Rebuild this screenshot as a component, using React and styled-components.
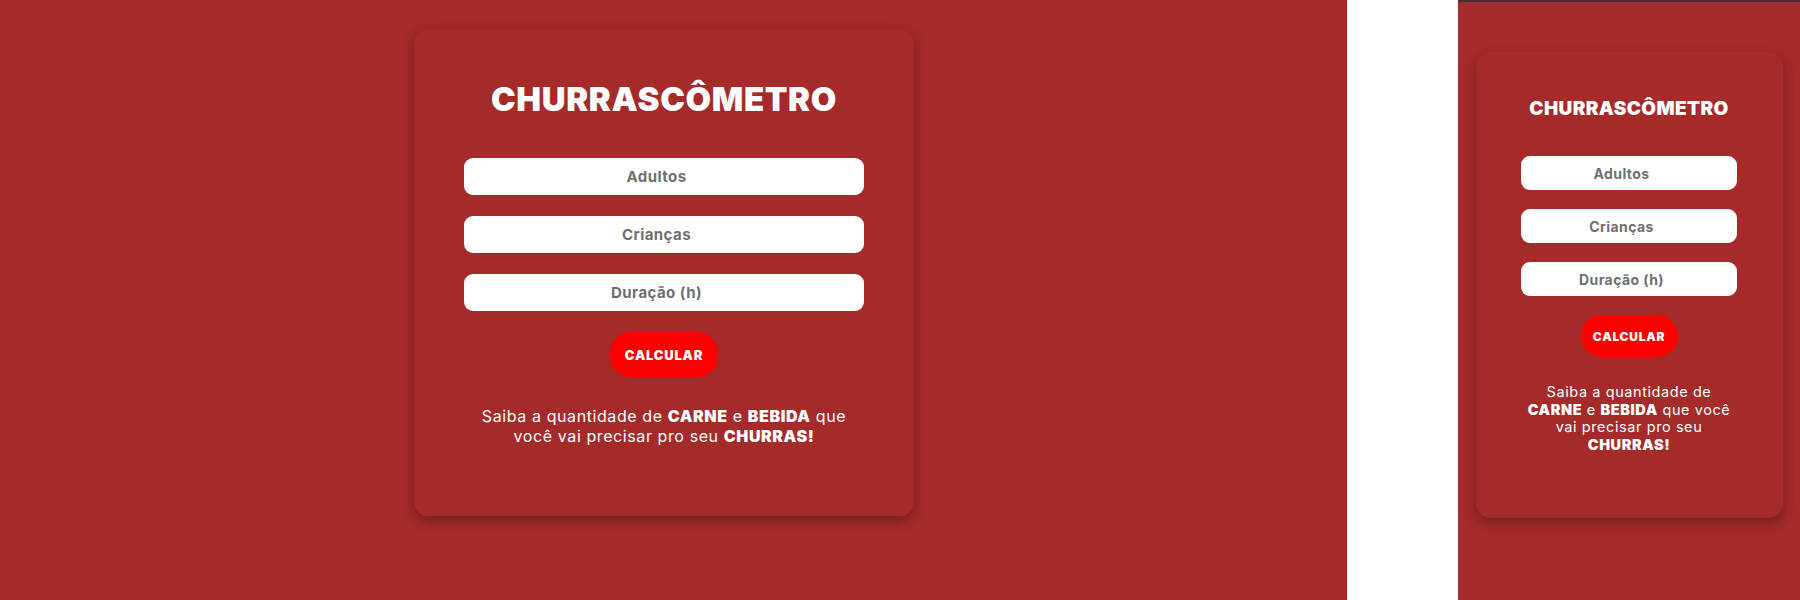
import React from "react";
import styled, { createGlobalStyle } from "styled-components";

const BRICK = "#a52a2a";

// two layouts of the same card: desktop (lg) and the narrow phone preview (sm)
const sizes = {
  lg: {
    cardW: 500,
    cardH: 487,
    padTop: 50,
    titleSize: 33,
    titleLine: 40,
    titleGap: 39,
    inputW: 400,
    inputH: 37,
    inputGap: 21,
    inputFont: 15,
    btnGap: 21,
    btnW: 108,
    btnH: 45,
    btnFont: 13,
    textGap: 30,
    textW: 400,
    textFont: 16,
    textLine: 19.5,
    textSpacing: "0.037em",
  },
  sm: {
    cardW: 307,
    cardH: 466,
    padTop: 45,
    titleSize: 19,
    titleLine: 24,
    titleGap: 35,
    inputW: 216,
    inputH: 34,
    inputGap: 19,
    inputFont: 14,
    btnGap: 19,
    btnW: 97,
    btnH: 42,
    btnFont: 12,
    textGap: 26,
    textW: 216,
    textFont: 14.5,
    textLine: 17.6,
    textSpacing: "0.04em",
  },
};

const GlobalStyle = createGlobalStyle`
  body {
    margin: 0;
    background: #fff;
    font-family: Inter, "Open Sans", sans-serif;
  }
`;

const Screen = styled.div`
  display: flex;
  height: 600px;
  width: 1800px;
  overflow: hidden;
`;

const DesktopView = styled.section`
  width: 1347px;
  padding-top: 29px;
  padding-right: 19px;
  box-sizing: border-box;
  background: ${BRICK};
  display: flex;
  justify-content: center;
  align-items: flex-start;
`;

const Gap = styled.div`
  width: 111px;
  background: #fff;
`;

const MobileView = styled.section`
  width: 342px;
  padding-top: 50px;
  box-sizing: border-box;
  background: ${BRICK};
  border-top: 2px solid #3b3434;
  display: flex;
  justify-content: center;
  align-items: flex-start;
`;

const Card = styled.form`
  width: ${(p) => sizes[p.$size].cardW}px;
  height: ${(p) => sizes[p.$size].cardH}px;
  padding-top: ${(p) => sizes[p.$size].padTop}px;
  box-sizing: border-box;
  background: ${BRICK};
  border-radius: 14px;
  box-shadow: 0 5px 12px rgba(0, 0, 0, 0.28);
  display: flex;
  flex-direction: column;
  align-items: center;
  color: #fff;
`;

const Title = styled.h1`
  margin: 0 0 ${(p) => sizes[p.$size].titleGap}px;
  font-size: ${(p) => sizes[p.$size].titleSize}px;
  line-height: ${(p) => sizes[p.$size].titleLine}px;
  font-weight: 900;
  letter-spacing: 0.02em;
`;

const Fields = styled.div`
  display: flex;
  flex-direction: column;
  gap: ${(p) => sizes[p.$size].inputGap}px;
`;

const Field = styled.input`
  width: ${(p) => sizes[p.$size].inputW}px;
  height: ${(p) => sizes[p.$size].inputH}px;
  box-sizing: border-box;
  border: none;
  border-radius: 9px;
  background: #fff;
  text-align: center;
  font-family: Inter, sans-serif;
  font-size: ${(p) => sizes[p.$size].inputFont}px;
  font-weight: 700;
  letter-spacing: 0.03em;
  outline: none;

  &::placeholder {
    color: #6f6f6f;
    opacity: 1;
  }
`;

const Calc = styled.button`
  margin-top: ${(p) => sizes[p.$size].btnGap}px;
  width: ${(p) => sizes[p.$size].btnW}px;
  height: ${(p) => sizes[p.$size].btnH}px;
  padding: 0;
  border: none;
  border-radius: 21px;
  background: #ff0000;
  color: #fff;
  font-family: Inter, sans-serif;
  font-size: ${(p) => sizes[p.$size].btnFont}px;
  font-weight: 900;
  letter-spacing: 0.06em;
  cursor: pointer;
`;

const Blurb = styled.p`
  margin: ${(p) => sizes[p.$size].textGap}px 0 0;
  width: ${(p) => sizes[p.$size].textW}px;
  text-align: center;
  font-size: ${(p) => sizes[p.$size].textFont}px;
  line-height: ${(p) => sizes[p.$size].textLine}px;
  font-weight: 400;
  letter-spacing: ${(p) => sizes[p.$size].textSpacing};

  strong {
    font-weight: 900;
  }
`;

const Churrascometro = ({ size }) => (
  <Card $size={size} onSubmit={(e) => e.preventDefault()}>
    <Title $size={size}>CHURRASCÔMETRO</Title>
    <Fields $size={size}>
      <Field $size={size} type="number" placeholder="Adultos" />
      <Field $size={size} type="number" placeholder="Crianças" />
      <Field $size={size} type="number" placeholder="Duração (h)" />
    </Fields>
    <Calc $size={size} type="submit">
      CALCULAR
    </Calc>
    <Blurb $size={size}>
      Saiba a quantidade de <strong>CARNE</strong> e <strong>BEBIDA</strong>{" "}
      que você vai precisar pro seu <strong>CHURRAS!</strong>
    </Blurb>
  </Card>
);

export default function App() {
  return (
    <>
      <GlobalStyle />
      <Screen>
        <DesktopView>
          <Churrascometro size="lg" />
        </DesktopView>
        <Gap />
        <MobileView>
          <Churrascometro size="sm" />
        </MobileView>
      </Screen>
    </>
  );
}
